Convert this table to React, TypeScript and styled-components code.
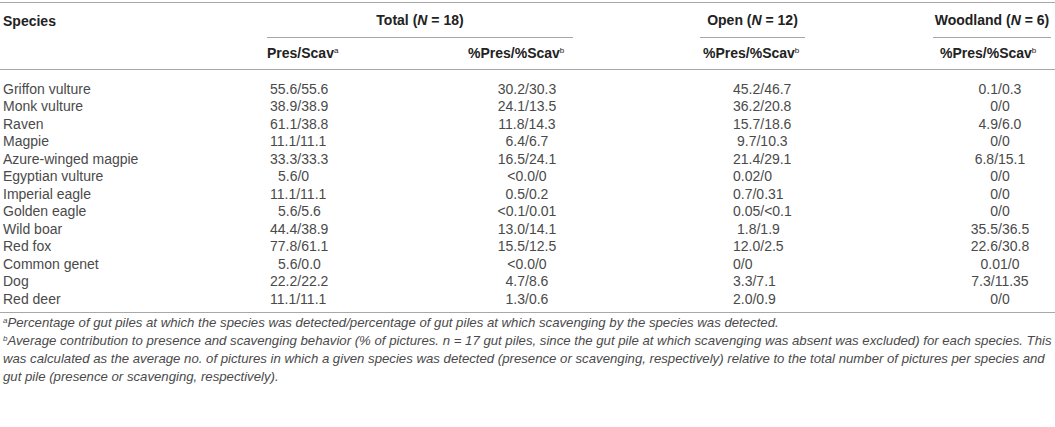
import styled, { createGlobalStyle } from "styled-components";

const GlobalStyle = createGlobalStyle`
  html, body {
    margin: 0;
    padding: 0;
    background: #ffffff;
  }
  body {
    font-family: "Liberation Sans", Arial, Helvetica, sans-serif;
    color: #3a3a3a;
  }
`;

type Align = "left" | "center";

interface Row {
  species: string;
  pres: string;
  presIndent?: boolean;
  total: string;
  open: string;
  openIndent?: boolean;
  wood: string;
}

const rows: Row[] = [
  { species: "Griffon vulture", pres: "55.6/55.6", total: "30.2/30.3", open: "45.2/46.7", wood: "0.1/0.3" },
  { species: "Monk vulture", pres: "38.9/38.9", total: "24.1/13.5", open: "36.2/20.8", wood: "0/0" },
  { species: "Raven", pres: "61.1/38.8", total: "11.8/14.3", open: "15.7/18.6", wood: "4.9/6.0" },
  { species: "Magpie", pres: "11.1/11.1", total: "6.4/6.7", open: "9.7/10.3", openIndent: true, wood: "0/0" },
  { species: "Azure-winged magpie", pres: "33.3/33.3", total: "16.5/24.1", open: "21.4/29.1", wood: "6.8/15.1" },
  { species: "Egyptian vulture", pres: "5.6/0", presIndent: true, total: "<0.0/0", open: "0.02/0", wood: "0/0" },
  { species: "Imperial eagle", pres: "11.1/11.1", total: "0.5/0.2", open: "0.7/0.31", wood: "0/0" },
  { species: "Golden eagle", pres: "5.6/5.6", presIndent: true, total: "<0.1/0.01", open: "0.05/<0.1", wood: "0/0" },
  { species: "Wild boar", pres: "44.4/38.9", total: "13.0/14.1", open: "1.8/1.9", openIndent: true, wood: "35.5/36.5" },
  { species: "Red fox", pres: "77.8/61.1", total: "15.5/12.5", open: "12.0/2.5", wood: "22.6/30.8" },
  { species: "Common genet", pres: "5.6/0.0", presIndent: true, total: "<0.0/0", open: "0/0", wood: "0.01/0" },
  { species: "Dog", pres: "22.2/22.2", total: "4.7/8.6", open: "3.3/7.1", wood: "7.3/11.35" },
  { species: "Red deer", pres: "11.1/11.1", total: "1.3/0.6", open: "2.0/0.9", wood: "0/0" },
];

export default function App() {
  return (
    <>
      <GlobalStyle />
      <Page>
        <Table>
          <colgroup>
            <col style={{ width: 267 }} />
            <col style={{ width: 201 }} />
            <col style={{ width: 232 }} />
            <col style={{ width: 233 }} />
            <col style={{ width: 122 }} />
          </colgroup>
          <thead>
            <GroupRow>
              <HeadCell pad={3}>Species</HeadCell>
              <HeadCell colSpan={2}>
                <GroupLabel width={306}>
                  Total (<i>N</i> = 18)
                </GroupLabel>
              </HeadCell>
              <HeadCell>
                <GroupLabel width={105}>
                  Open (<i>N</i> = 12)
                </GroupLabel>
              </HeadCell>
              <HeadCell>
                <GroupLabel width={118}>
                  Woodland (<i>N</i> = 6)
                </GroupLabel>
              </HeadCell>
            </GroupRow>
            <SubRow>
              <HeadCell />
              <HeadCell>
                Pres/Scav<Sup>a</Sup>
              </HeadCell>
              <HeadCell>
                %Pres/%Scav<Sup>b</Sup>
              </HeadCell>
              <HeadCell pad={3}>
                %Pres/%Scav<Sup>b</Sup>
              </HeadCell>
              <HeadCell pad={7}>
                %Pres/%Scav<Sup>b</Sup>
              </HeadCell>
            </SubRow>
          </thead>
          <tbody>
            {rows.map((r, i) => (
              <BodyRow key={r.species} first={i === 0} last={i === rows.length - 1}>
                <Cell pad={3}>{r.species}</Cell>
                <Cell pad={r.presIndent ? 11 : 3}>{r.pres}</Cell>
                <Cell align="center" padRight={114}>
                  {r.total}
                </Cell>
                <Cell pad={r.openIndent ? 37 : 33}>{r.open}</Cell>
                <Cell align="center" pad={12}>
                  {r.wood}
                </Cell>
              </BodyRow>
            ))}
          </tbody>
        </Table>
        <Notes>
          <Note>
            <NoteSup>a</NoteSup>Percentage of gut piles at which the species was detected/percentage of gut piles at
            which scavenging by the species was detected.
          </Note>
          <Note>
            <NoteSup>b</NoteSup>Average contribution to presence and scavenging behavior (% of pictures. <i>n</i> = 17
            gut piles, since the gut pile at which scavenging was absent was excluded) for each species. This
          </Note>
          <Note>
            was calculated as the average no. of pictures in which a given species was detected (presence or
            scavenging, respectively) relative to the total number of pictures per species and
          </Note>
          <Note>gut pile (presence or scavenging, respectively).</Note>
        </Notes>
      </Page>
    </>
  );
}

const Page = styled.div`
  width: 1055px;
  height: 427px;
  overflow: hidden;
  background: #fff;
  padding-top: 2px;
  box-sizing: border-box;
`;

const Table = styled.table`
  width: 1055px;
  table-layout: fixed;
  border-collapse: collapse;
  border-spacing: 0;
  border-top: 1.5px solid #a8a8a8;
  border-bottom: 1.5px solid #a8a8a8;
`;

const GroupRow = styled.tr`
  height: 35px;
`;

const SubRow = styled.tr`
  height: 31px;
  border-bottom: 1.5px solid #a8a8a8;
`;

const HeadCell = styled.th<{ pad?: number }>`
  padding: 0 0 0 ${(p) => p.pad ?? 0}px;
  text-align: left;
  vertical-align: middle;
  font-size: 14px;
  font-weight: 700;
  color: #222;
  white-space: nowrap;
  i {
    font-style: italic;
  }
`;

const GroupLabel = styled.div<{ width: number }>`
  width: ${(p) => p.width}px;
  height: 35px;
  line-height: 34px;
  text-align: center;
  border-bottom: 1.5px solid #a8a8a8;
  box-sizing: border-box;
`;

const Sup = styled.sup`
  font-size: 8px;
  font-weight: 400;
  vertical-align: 5px;
  line-height: 0;
`;

const BodyRow = styled.tr<{ first: boolean; last: boolean }>`
  td {
    padding-top: ${(p) => (p.first ? 11 : 0)}px;
    padding-bottom: ${(p) => (p.last ? 4 : 0)}px;
  }
`;

const Cell = styled.td<{ align?: Align; pad?: number; padRight?: number }>`
  font-size: 14px;
  line-height: 17.5px;
  height: 17.5px;
  color: #4a4a4a;
  white-space: nowrap;
  text-align: ${(p) => p.align ?? "left"};
  padding-left: ${(p) => p.pad ?? 0}px;
  padding-right: ${(p) => p.padRight ?? 0}px;
`;

const Notes = styled.div`
  padding: 1px 0 0 3px;
  font-size: 13.2px;
  font-style: italic;
  line-height: 18px;
  color: #4a4a4a;
`;

const Note = styled.div`
  white-space: nowrap;
`;

const NoteSup = styled.sup`
  font-size: 8px;
  vertical-align: 4px;
  line-height: 0;
`;
